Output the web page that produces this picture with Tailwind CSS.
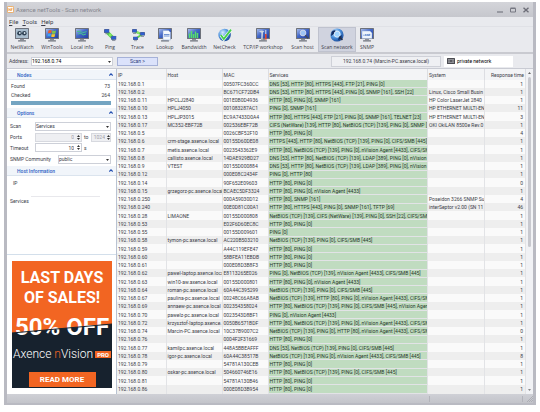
<!DOCTYPE html>
<html lang="en">
<head>
    <meta charset="UTF-8">
    <meta name="viewport" content="width=device-width, initial-scale=1.0">
    <title>Axence netTools - Scan network</title>
    <script src="https://cdn.jsdelivr.net/npm/@tailwindcss/browser@4"></script>
</head>
<body class="bg-white font-[Roboto,sans-serif] text-[5px] leading-[6px] text-[#3c3d48]">

    <!-- Shared icon parts -->
    <svg class="absolute w-0 h-0" aria-hidden="true">
        <defs>
            <linearGradient id="screen" x1="0" y1="0" x2="1" y2="1">
                <stop offset="0" stop-color="#a9bdea"/>
                <stop offset=".45" stop-color="#4468c8"/>
                <stop offset="1" stop-color="#2341a0"/>
            </linearGradient>
            <radialGradient id="globe" cx=".35" cy=".3" r=".8">
                <stop offset="0" stop-color="#d6edff"/>
                <stop offset=".5" stop-color="#4a90dc"/>
                <stop offset="1" stop-color="#123f8e"/>
            </radialGradient>
            <symbol id="monitor" viewBox="0 0 14 14">
                <rect x="0" y="0" width="14" height="11" rx=".6" fill="#6d717b"/>
                <rect x="1" y="1" width="12" height="9" fill="url(#screen)"/>
                <rect x="5" y="11" width="4" height="1.2" fill="#8d9098"/>
                <rect x="3" y="12.2" width="8" height="1.3" rx=".5" fill="#6d717b"/>
            </symbol>
            <symbol id="pc" viewBox="0 0 5 5">
                <rect width="5" height="3.6" rx=".4" fill="#55628a"/>
                <rect x=".6" y=".5" width="3.8" height="2.6" fill="#2e5fd0"/>
                <rect x="1" y="4" width="3" height=".8" fill="#7b8190"/>
            </symbol>
        </defs>
    </svg>

    <div class="flex flex-col h-[calc(100vh-9px)] mt-[2px] ml-[4px] mr-[4px] bg-[#e9eaee] border-x-[3px] border-b-2 border-[#b9bac2]">

        <!-- Title bar -->
        <header class="flex items-center h-[15px] shrink-0 bg-linear-to-b from-[#d4d5da] to-[#c6c7cd]">
            <svg class="w-[7px] h-[7px]" viewBox="0 0 7 7">
                <rect x=".4" y=".4" width="6.2" height="6.2" rx="1" fill="#fff" stroke="#ef9b3c" stroke-width=".8"/>
                <path d="M1.8 5V2.5L3.3 4.8V2.4M4.3 5V2.3H5.6M4.3 3.6H5.3" fill="none" stroke="#e88424" stroke-width=".6"/>
            </svg>
            <h1 class="pl-[2px] text-[6px] text-[#85868f]">Axence netTools - Scan network</h1>
            <div class="flex items-center ml-auto gap-[7px] pr-[4px]">
                <button type="button" aria-label="Minimize"><svg class="w-[6px] h-[6px]" viewBox="0 0 6 6"><path d="M0 5H6" stroke="#777882" stroke-width="1.2"/></svg></button>
                <button type="button" aria-label="Maximize"><svg class="w-[6px] h-[6px]" viewBox="0 0 6 6"><path d="M.5 1.5H5.5V5H.5ZM.5 1H5.5" fill="none" stroke="#777882"/></svg></button>
                <button type="button" aria-label="Close"><svg class="w-[6px] h-[6px]" viewBox="0 0 6 6"><path d="M.5 .8L5.5 5.2M5.5 .8L.5 5.2" stroke="#6c6d77" stroke-width="1.4"/></svg></button>
            </div>
        </header>

        <!-- Menu -->
        <nav class="flex items-center h-[10px] shrink-0 pl-[2px] gap-[4px] text-[6px] border-b border-[#e0e1e6]">
            <button type="button"><u>F</u>ile</button>
            <button type="button"><u>T</u>ools</button>
            <button type="button"><u>H</u>elp</button>
        </nav>

        <!-- Toolbar -->
        <div class="flex h-[27px] shrink-0 border-b-2 border-[#c9cad0] font-['Open_Sans',sans-serif] [&>button]:flex [&>button]:flex-col [&>button]:items-center [&>button]:pt-[1px] [&>button]:h-[25px] [&>button]:shrink-0 [&>button]:whitespace-nowrap [&_svg]:size-[14px] [&_svg]:mb-[2px]">
            <button type="button" class="w-[30px]">
                <svg viewBox="0 0 14 14"><use href="#monitor"/><rect x="1" y="1" width="12" height="9" fill="#a8bccd"/><circle cx="4.5" cy="5.2" r="2.3" fill="#2e4052"/><circle cx="9.3" cy="5.2" r="2.3" fill="#2e4052"/><circle cx="4.8" cy="5" r=".9" fill="#dbe8f2"/><circle cx="9.6" cy="5" r=".9" fill="#dbe8f2"/></svg>
                <span>NetWatch</span>
            </button>
            <button type="button" class="w-[30px]">
                <svg viewBox="0 0 14 14"><use href="#monitor"/><path d="M3.5 2.4Q5 1.6 6.8 2.4L6.2 5.2Q4.6 4.6 3 5.3Z" fill="#ee5a2a"/><path d="M7.4 2.6Q9 3.3 11 2.6L10.4 5.4Q8.6 6.1 6.8 5.4Z" fill="#7fc548"/><path d="M2.9 5.9Q4.6 5.1 6 5.9L5.5 8.6Q4 7.9 2.3 8.6Z" fill="#3fa3ef"/><path d="M6.7 6Q8.4 6.7 10.2 6L9.6 8.8Q8 9.4 6.1 8.7Z" fill="#f8c52c"/></svg>
                <span>WinTools</span>
            </button>
            <button type="button" class="w-[30px]">
                <svg viewBox="0 0 14 14"><use href="#monitor"/><path d="M2 3.4H6L7.4 4.8L11.6 3.6M3 6L6 5.2L8 7L11 6" stroke="#43c58b" stroke-width="1" fill="none"/></svg>
                <span>Local info</span>
            </button>
            <button type="button" class="w-[26px]">
                <svg viewBox="0 0 14 14"><path d="M3 3L11 11" stroke="#4fce4a" stroke-width="3.4"/><use href="#pc" x="1" y="1" width="5.5" height="5.5"/><use href="#pc" x="8" y="7.8" width="5.5" height="5.5"/><circle cx="7.2" cy="7" r="1.5" fill="#8be765"/></svg>
                <span>Ping</span>
            </button>
            <button type="button" class="w-[29px]">
                <svg viewBox="0 0 14 14"><path d="M3 3L11 6.5L4 11" stroke="#5fd052" stroke-width="2" fill="none"/><use href="#pc" x="1" y="1" width="5" height="5"/><use href="#pc" x="9" y="4" width="5" height="5"/><use href="#pc" x="2" y="8.4" width="5" height="5"/><circle cx="7" cy="4.8" r="1.3" fill="#8be765"/></svg>
                <span>Trace</span>
            </button>
            <button type="button" class="w-[26px]">
                <svg viewBox="0 0 14 14"><use href="#monitor"/><path d="M5 2.5H10.5L12.5 4.5V12H5Z" fill="#f4f8fd" stroke="#8fa6cf" stroke-width=".5"/><path d="M6 6.5H11.5M6 8H11.5" stroke="#4f79c8" stroke-width=".8"/></svg>
                <span>Lookup</span>
            </button>
            <button type="button" class="w-[32px]">
                <svg viewBox="0 0 14 14"><use href="#monitor"/><path d="M2.5 10V5.5M4.5 10V3M6.5 10V6M8.5 10V3.6M10.5 10V5" stroke="#58dd6c" stroke-width="1.5"/></svg>
                <span>Bandwidth</span>
            </button>
            <button type="button" class="w-[29px]">
                <svg viewBox="0 0 14 14"><circle cx="6.6" cy="7" r="6.2" fill="url(#globe)"/><path d="M2.8 7L5.8 11L13 1.6" stroke="#fff" stroke-width="3" fill="none"/><path d="M2.8 7L5.8 11L13 1.6" stroke="#45cf4a" stroke-width="1.9" fill="none"/></svg>
                <span>NetCheck</span>
            </button>
            <button type="button" class="w-[48px]">
                <svg viewBox="0 0 14 14"><use href="#monitor"/><path d="M3 3.4Q6 1.5 8.3 3.6L7 4.6L6.6 11.4H5.2L5.4 4.7Z" fill="#cfd6e0"/><path d="M9.8 2V6.4" stroke="#dfe4ea" stroke-width="1"/><path d="M9.8 6V11.6" stroke="#dc4a38" stroke-width="1.7"/></svg>
                <span>TCP/IP workshop</span>
            </button>
            <button type="button" class="w-[31px]">
                <svg viewBox="0 0 14 14"><use href="#monitor"/><circle cx="7" cy="5" r="2.9" fill="#9fc3f3" stroke="#d2d9e8" stroke-width=".9"/><path d="M9.2 7.2L12.2 10.6" stroke="#434a5b" stroke-width="1.5"/></svg>
                <span>Scan host</span>
            </button>
            <button type="button" class="w-[38px] bg-[#d0d3df] outline outline-[#bfc2ce] -outline-offset-1">
                <svg viewBox="0 0 14 14"><circle cx="7" cy="7" r="6.6" fill="url(#globe)"/><path d="M1.5 4Q4 1 6 3L4 6L1 8ZM9 9L12 7L11 11L8 12Z" fill="#102b63"/><circle cx="7.2" cy="6.2" r="3" fill="#9fd3ff" stroke="#e8f0fa" stroke-width=".9"/><path d="M9.4 8.4L12.4 12" stroke="#24304a" stroke-width="1.6"/></svg>
                <span>Scan network</span>
            </button>
            <button type="button" class="w-[22px]">
                <svg viewBox="0 0 14 14"><use href="#monitor"/><path d="M2 3H10L12 5V10.6H2Z" fill="#edf4fc" stroke="#92add8" stroke-width=".5"/><path d="M3.2 7.2H4.8M5.6 8V6.2L6.5 7.4L7.4 6.2V8M8.6 8V6.4H10V7.3H8.6" stroke="#4b77c4" stroke-width=".7" fill="none"/></svg>
                <span>SNMP</span>
            </button>
        </div>

        <!-- Address row -->
        <form class="flex items-center h-[15px] shrink-0 pl-[2px] border-b border-[#c9cbd3]">
            <label for="address" class="w-[22px]">Address:</label>
            <div class="relative w-[82px]">
                <select id="address" class="block w-full h-[9px] appearance-none bg-white border border-[#cdd0d8] text-black">
                    <option>192.168.0.74</option>
                </select>
                <svg class="absolute right-[2px] top-[4px] w-[3px] h-[2px] pointer-events-none" viewBox="0 0 3 2"><path d="M0 0H3L1.5 2Z" fill="#333"/></svg>
            </div>
            <button type="button" class="w-[41px] h-[9px] ml-[4px] bg-[#dbe2fb] border border-[#a5b1d8] text-[#2d3c78]">Scan &gt;</button>
            <div class="flex items-center justify-center ml-auto w-[110px] h-[11px] bg-[#eff0f3] border border-[#cfd1d8]">192.168.0.74 (Marcin-PC.axence.local)</div>
            <div class="flex items-center gap-[2px] w-[69px] h-[11px] ml-[3px] mr-[20px] pl-[3px] bg-white">
                <svg class="w-[8px] h-[6px]" viewBox="0 0 8 6"><rect width="8" height="6" rx=".5" fill="#4b4c52"/><path d="M1 1.7H7M1 4.3H7M1 3H3M5 3H7" stroke="#c6c7cc" stroke-width=".7"/></svg>
                <span class="text-black">private network</span>
            </div>
        </form>

        <main class="flex grow min-h-0 bg-white">

            <!-- Side panel -->
            <aside class="w-[110px] shrink-0 border-r border-[#b9c3d2]">
                <section class="pt-[1px]">
                    <h2 class="flex items-center justify-between h-[10px] pl-[10px] pr-[3px] bg-[#f1f5fa] border-b border-[#dbe4ee] text-[#2d5fc4] font-medium">Nodes
                        <svg class="w-[4px] h-[3px]" viewBox="0 0 4 3"><path d="M.3 2.6L2 .8L3.7 2.6" stroke="#2450b0" stroke-width="1.1" fill="none"/></svg></h2>
                    <dl class="grid grid-cols-[1fr_auto] gap-y-[3px] pt-[3px] pl-[4px] pr-[6px]">
                        <dt>Found</dt><dd class="text-right">73</dd>
                        <dt>Checked</dt><dd class="text-right">264</dd>
                    </dl>
                    <div class="h-[4px] mt-[3px] ml-[4px] mr-[5px] bg-[#74a5c2]"></div>
                </section>
                <section class="pt-[3px]">
                    <h2 class="flex items-center justify-between h-[10px] pl-[10px] pr-[3px] bg-[#f1f5fa] border-b border-[#dbe4ee] text-[#2d5fc4] font-medium">Options
                        <svg class="w-[4px] h-[3px]" viewBox="0 0 4 3"><path d="M.3 2.6L2 .8L3.7 2.6" stroke="#2450b0" stroke-width="1.1" fill="none"/></svg></h2>
                    <div class="flex flex-col gap-[1px] pt-[3px] pl-[3px] pr-[5px]">
                        <div class="flex items-center h-[10px]">
                            <label for="scan" class="w-[25px] shrink-0">Scan</label>
                            <div class="relative grow">
                                <select id="scan" class="block w-full h-[9px] appearance-none border border-[#cdd0d8]"><option>Services</option></select>
                                <svg class="absolute right-[2px] top-[4px] w-[3px] h-[2px] pointer-events-none" viewBox="0 0 3 2"><path d="M0 0H3L1.5 2Z" fill="#333"/></svg>
                            </div>
                        </div>
                        <div class="flex items-center h-[10px]">
                            <label for="port-from" class="w-[25px] shrink-0">Ports</label>
                            <div class="relative shrink-0">
                                <input id="port-from" value="0" disabled class="block w-[47px] h-[9px] pr-[7px] text-right bg-[#eeeff2] border border-[#d7d9df] text-[#a0a1a9]">
                                <svg class="absolute right-[2px] top-[2px] w-[3px] h-[5px]" viewBox="0 0 3 5"><path d="M0 2L1.5 0L3 2ZM0 3H3L1.5 5Z" fill="#333"/></svg>
                            </div>
                            <label for="port-to" class="w-[9px] shrink-0 pl-[2px]">to</label>
                            <div class="relative grow min-w-0">
                                <input id="port-to" value="1024" disabled class="block w-full h-[9px] pr-[5px] text-right bg-[#eeeff2] border border-[#d7d9df] text-[#a0a1a9]">
                                <svg class="absolute right-[1px] top-[2px] w-[3px] h-[5px]" viewBox="0 0 3 5"><path d="M0 2L1.5 0L3 2ZM0 3H3L1.5 5Z" fill="#333"/></svg>
                            </div>
                        </div>
                        <div class="flex items-center h-[9px]">
                            <label for="timeout" class="w-[25px] shrink-0">Timeout</label>
                            <div class="relative shrink-0">
                                <input id="timeout" value="10" class="block w-[47px] h-[9px] pr-[7px] text-right border border-[#cdd0d8]">
                                <svg class="absolute right-[2px] top-[2px] w-[3px] h-[5px]" viewBox="0 0 3 5"><path d="M0 2L1.5 0L3 2ZM0 3H3L1.5 5Z" fill="#333"/></svg>
                            </div>
                            <span class="pl-[2px]">s</span>
                        </div>
                        <div class="flex items-center h-[12px]">
                            <label for="community" class="w-[48px] shrink-0">SNMP Community</label>
                            <div class="relative grow">
                                <select id="community" class="block w-full h-[9px] appearance-none border border-[#cdd0d8]"><option>public</option></select>
                                <svg class="absolute right-[2px] top-[4px] w-[3px] h-[2px] pointer-events-none" viewBox="0 0 3 2"><path d="M0 0H3L1.5 2Z" fill="#333"/></svg>
                            </div>
                        </div>
                    </div>
                </section>
                <section class="pt-[1px] h-[90px] border-b border-[#d3dfeb]">
                    <h2 class="flex items-center justify-between h-[10px] pl-[10px] pr-[3px] bg-[#f1f5fa] border-b border-[#dbe4ee] text-[#2d5fc4] font-medium">Host Information
                        <svg class="w-[4px] h-[3px]" viewBox="0 0 4 3"><path d="M.3 2.6L2 .8L3.7 2.6" stroke="#2450b0" stroke-width="1.1" fill="none"/></svg></h2>
                    <p class="pt-[4px] pl-[6px]">IP</p>
                    <div class="mt-[10px] ml-[24px] mr-[16px] border-b border-[#e8e8ec]"></div>
                    <p class="pt-[1px] pl-[3px]">Services</p>
                </section>

                <!-- Promo banner -->
                <a href="#" class="relative block h-[127px] mt-[6px] ml-[5px] mr-[4px] overflow-hidden bg-[#f26522] text-white text-center font-bold">
                    <svg class="absolute inset-0 size-full" viewBox="0 0 100 127" preserveAspectRatio="none"><path d="M0 72L100 63V127H0Z" fill="#17222e"/></svg>
                    <div class="relative flex flex-col items-center">
                        <span class="pt-[7px] text-[16px] leading-[20px]">LAST DAYS<br>OF SALES!</span>
                        <span class="pt-[4px] text-[24px] leading-[30px] whitespace-nowrap">50% OFF</span>
                        <svg class="absolute top-[60px] w-full h-[14px]" viewBox="0 0 100 14" preserveAspectRatio="none"><path d="M0 12L100 3" stroke="#17222e" stroke-width="1"/></svg>
                        <span class="flex items-center gap-[2px] pt-[5px] text-[12px] leading-[14px] font-light whitespace-nowrap"><span>Axence <span class="text-[#f26522]">n</span>Vision</span>
                            <span class="px-[2px] bg-[#f26522] text-[6px] leading-[7px] font-bold">PRO</span></span>
                        <span class="w-[67px] mt-[11px] bg-[#f26522] text-[8px] leading-[15px]">READ MORE</span>
                    </div>
                </a>
            </aside>

            <!-- Results -->
            <div class="grow min-w-0 overflow-hidden">
                <table class="w-full h-full table-fixed border-collapse whitespace-nowrap">
                    <colgroup>
                        <col class="w-[49px]"><col class="w-[56px]"><col class="w-[46px]"><col><col class="w-[57px]"><col class="w-[41px]">
                    </colgroup>
                    <thead>
                        <tr class="h-[11px] bg-[#f3f4f6] text-left [&>th]:font-normal [&>th]:border-r [&>th]:border-[#dcdde2] [&>th]:py-0 [&>th]:px-[1px]">
                            <th>IP</th><th>Host</th><th>MAC</th><th>Services</th><th>System</th><th class="text-right">Response time</th>
                        </tr>
                    </thead>
                    <tbody id="hosts"></tbody>
                </table>
            </div>

            <!-- Scrollbar -->
            <div class="flex flex-col items-center w-[7px] shrink-0 bg-[#f1f2f5] py-[3px]">
                <svg class="w-[3px] h-[2px]" viewBox="0 0 3 2"><path d="M0 2L1.5 0L3 2Z" fill="#666"/></svg>
                <div class="w-[3px] h-[170px] mt-[3px] bg-[#c8c9cf] rounded-full"></div>
                <svg class="w-[3px] h-[2px] mt-auto" viewBox="0 0 3 2"><path d="M0 0H3L1.5 2Z" fill="#888"/></svg>
            </div>
        </main>

        <!-- Status bar -->
        <footer class="flex items-center justify-end h-[9px] shrink-0 bg-linear-to-b from-[#cfd0d6] to-[#c3c4ca]">
            <div class="w-[94px] h-[6px] border-x border-[#b3b4bb]"></div>
            <svg class="w-[6px] h-[6px] ml-[4px]" viewBox="0 0 6 6"><path d="M0 6L6 0M2 6L6 2M4 6L6 4" stroke="#a2a3ab" stroke-width=".7"/></svg>
        </footer>
    </div>

    <script>
        // ip suffix, host, mac, services, system, response time
        const hosts = [
            ['1', '', '00507FC360CC', 'DNS [53], HTTP [80], HTTPS [443], FTP [21], PING [0]', '', 1],
            ['2', '', 'BC671CF72DB4', 'DNS [53], HTTP [80], HTTPS [443], PING [0], SNMP [161], SSH [22]', 'Linux, Cisco Small Busin', 1],
            ['11', 'HPCLJ2840', '001E0B0D4936', 'HTTP [80], PING [0], SNMP [161]', 'HP Color LaserJet 2840', 1],
            ['10', 'HPLJ4050', '001083287AC1', 'PING [0], SNMP [161]', 'HP ETHERNET MULTI-EN', 11],
            ['13', 'HPLJP3015', 'EC9A7433D0A4', 'HTTP [80], HTTPS [443], FTP [21], PING [0], SNMP [161], TELNET [23]', 'HP ETHERNET MULTI-EN', 3],
            ['17', 'MC352-EBF72B', '002536EBF72B', 'CIFS (NetWare) [139], HTTP [80], NetBIOS (TCP) [139], PING [0], SNMP [1', 'OKI OkiLAN 8500e Rev.0', 1],
            ['5', '', '0026CBF52F10', 'HTTP [80], PING [0]', '', 4],
            ['6', 'crm-stage.axence.local', '00155D60DE08', 'HTTPS [443], HTTP [80], NetBIOS (TCP) [139], PING [0], CIFS/SMB [445]', '', 1],
            ['7', 'metis.axence.local', '0023543362E9', 'HTTP [80], NetBIOS (TCP) [139], PING [0], nVision Agent [4433], CIFS/SMB', '', 1],
            ['8', 'callisto.axence.local', '14DAE929BD27', 'DNS [53], HTTP [80], NetBIOS (TCP) [139], LDAP [389], PING [0], nVision A', '', 1],
            ['9', 'VTEST', '00155D000884', 'DNS [53], HTTP [80], NetBIOS (TCP) [139], LDAP [389], PING [0], nVision A', '', 1],
            ['12', '', '000E08C2434F', 'PING [0], HTTP [80]', '', 1],
            ['14', '', '90F652E09603', 'HTTP [80], PING [0]', '', 0],
            ['15', 'grzegorz-pc.axence.local', 'BCAEC5DF3324', 'HTTP [80], PING [0], nVision Agent [4433]', '', 1],
            ['250', '', '000A59030D12', 'HTTP [80], SNMP [161]', 'Poseidon 3266 SNMP Su', 4],
            ['240', '', '00E0D81C00A1', 'HTTP [80], HTTPS [443], PING [0], SNMP [161], TFTP [69]', 'interSeptor v2.00 (SN 11', 46],
            ['28', 'LIMAONE', '00155D000808', 'NetBIOS (TCP) [139], CIFS (NetWare) [139], PING [0], SSH [22], CIFS/SMB', '', 1],
            ['53', '', 'E02F6D60EC8C', 'HTTP [80], PING [0]', '', 1],
            ['55', '', '00155D009601', 'PING [0]', '', 1],
            ['58', 'tymon-pc.axence.local', 'AC220B503210', 'NetBIOS (TCP) [139], PING [0], CIFS/SMB [445]', '', 1],
            ['59', '', 'A44C119EFE47', 'HTTP [80], PING [0]', '', 1],
            ['60', '', '58BFEA11EBDB', 'HTTP [80], PING [0]', '', 1],
            ['61', '', '000E08D3B8F3', 'HTTP [80], PING [0]', '', 1],
            ['62', 'pawel-laptop.axence.loca', 'E8113265E026', 'PING [0], NetBIOS (TCP) [139], nVision Agent [4433], CIFS/SMB [445]', '', 1],
            ['63', 'win10-aw.axence.local', '00155D000801', 'HTTP [80], PING [0], nVision Agent [4433]', '', 1],
            ['64', 'roman-pc.axence.local', '60A44C395299', 'NetBIOS (TCP) [139], PING [0], CIFS/SMB [445]', '', 1],
            ['67', 'paulina-pc.axence.local', '00248C66A8AB', 'NetBIOS (TCP) [139], HTTP [80], PING [0], nVision Agent [4433], CIFS/SMB', '', 1],
            ['69', 'annaew-pc.axence.local', '002354358024', 'HTTP [80], NetBIOS (TCP) [139], PING [0], CIFS/SMB [445], nVision Agent', '', 1],
            ['70', 'pawelz-pc.axence.local', '0023543D8BF1', 'PING [0], nVision Agent [4433]', '', 1],
            ['72', 'krzysztof-laptop.axence.', '0050B6571BDF', 'HTTP [80], NetBIOS (TCP) [139], PING [0], nVision Agent [4433], CIFS/SMB', '', 1],
            ['74', 'Marcin-PC.axence.local', '10C37B9007C2', 'NetBIOS (TCP) [139], PING [0], HTTP [80], nVision Agent [4433], CIFS/SMB', '', 0],
            ['76', '', '0004F2F31669', 'HTTP [80], PING [0]', '', 1],
            ['77', 'kamilpc.axence.local', '448A5BBEAFFF', 'DNS [53], NetBIOS (TCP) [139], PING [0], CIFS/SMB [445]', '', 1],
            ['78', 'igor-pc.axence.local', '60A44C38517B', 'NetBIOS (TCP) [139], PING [0], nVision Agent [4433], CIFS/SMB [445]', '', 8],
            ['79', '', '54781A130CEB', 'HTTP [80], PING [0]', '', 1],
            ['80', 'oskar-pc.axence.local', '504660746E16', 'HTTP [80], NetBIOS (TCP) [139], PING [0], CIFS/SMB [445]', '', 1],
            ['81', '', '54781A130B46', 'HTTP [80], PING [0]', '', 1],
            ['86', '', '000E08D3B954', 'HTTP [80], PING [0]', '', 1]
        ];

        document.getElementById('hosts').innerHTML = hosts.map(([ip, host, mac, services, system, time]) => `
            <tr class="odd:bg-[#fafafa] even:bg-[#eeeeee] [&>td]:py-0 [&>td]:pl-[1px] [&>td]:overflow-hidden [&>td]:border-r [&>td]:border-[#e2e3e6]">
                <td>192.168.0.${ip}</td>
                <td>${host}</td>
                <td>${mac}</td>
                <td class="bg-[#c0dcc0] border-b border-b-[#d5e8d5] pr-0 text-[#26382a]">${services}</td>
                <td class="pr-0">${system}</td>
                <td class="pr-[2px] text-right">${time}</td>
            </tr>`).join('');
    </script>
</body>
</html>
